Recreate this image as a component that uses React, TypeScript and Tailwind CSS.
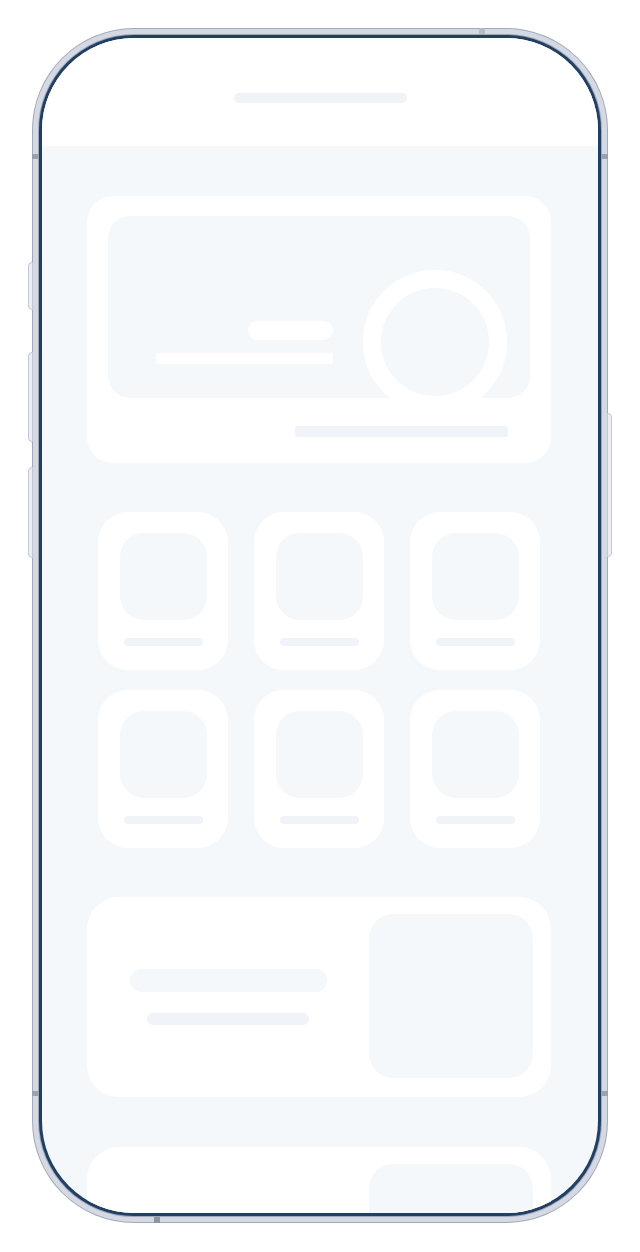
import React from 'react'

function Tile() {
  return (
    <div className="flex h-[158px] flex-col items-center rounded-[30px] bg-white pt-[21px]">
      <div className="h-[87px] w-[87px] rounded-[24px] bg-[#f4f8fb]" />
      <div className="mt-[18px] h-[8px] w-[79px] rounded-sm bg-[#f0f4f8]" />
    </div>
  )
}

function WideCard() {
  return (
    <section className="flex h-[200px] shrink-0 items-start rounded-[32px] bg-white pr-[18px] pt-[17px]">
      <div className="flex h-[166px] flex-1 flex-col items-center justify-center gap-[21px]">
        <div className="h-[23px] w-[197px] rounded-full bg-[#f4f8fb]" />
        <div className="h-[12px] w-[162px] rounded-full bg-[#f0f4f8]" />
      </div>
      <div className="h-[164px] w-[164px] rounded-[24px] bg-[#f4f8fb]" />
    </section>
  )
}

export default function App() {
  return (
    <div className="h-[1252px] w-[640px] overflow-hidden bg-white pl-[32px] pt-[28px]">
      {/* phone frame */}
      <div className="relative h-[1195px] w-[576px]">
        {/* side buttons */}
        <div className="absolute left-[-4px] top-[234px] h-[48px] w-[5px] rounded-l-sm border border-[#c3c8d2] bg-[#eceef2]" />
        <div className="absolute left-[-4px] top-[324px] h-[90px] w-[5px] rounded-l-sm border border-[#c3c8d2] bg-[#eceef2]" />
        <div className="absolute left-[-4px] top-[439px] h-[91px] w-[5px] rounded-l-sm border border-[#c3c8d2] bg-[#eceef2]" />
        <div className="absolute right-[-4px] top-[385px] h-[144px] w-[5px] rounded-r-sm border border-[#c3c8d2] bg-[#eceef2]" />

        <div className="h-full w-full rounded-[102px] bg-[#a3abb9] p-[1px]">
          <div className="h-full w-full rounded-[101px] bg-[#d5d9e3] p-[5px]">
            <div className="h-full w-full rounded-[96px] bg-[#9ea7b8] p-[1px]">
              <div className="h-full w-full rounded-[95px] bg-[#213f63] p-[3px]">
                {/* screen */}
                <div className="flex h-full w-full flex-col overflow-hidden rounded-[92px] bg-[#f4f8fb]">
                  <header className="flex h-[108px] shrink-0 justify-center bg-white pt-[55px]">
                    <div className="h-[10px] w-[173px] rounded-full bg-[#f0f4f8]" />
                  </header>

                  <main className="ml-[45px] flex w-[464px] flex-col pt-[50px]">
                    {/* hero card */}
                    <section className="flex h-[267px] flex-col rounded-[26px] bg-white px-[21px] pt-[20px]">
                      <div className="relative h-[182px] rounded-[22px] bg-[#f4f8fb]">
                        <div className="flex w-[225px] flex-col items-end gap-[13px] pt-[105px]">
                          <div className="h-[19px] w-[85px] rounded-full bg-white" />
                          <div className="h-[11px] w-[177px] rounded-[2px] bg-white" />
                        </div>
                        <div className="absolute left-[255px] top-[54px] h-[144px] w-[144px] rounded-full border-[18px] border-white bg-[#f4f8fb]" />
                      </div>
                      <div className="mt-[28px] flex justify-end pr-[22px]">
                        <div className="h-[11px] w-[213px] rounded-[2px] bg-[#f0f4f8]" />
                      </div>
                    </section>

                    {/* tiles */}
                    <div className="mx-auto mt-[49px] grid w-[442px] grid-cols-3 gap-x-[26px] gap-y-[20px]">
                      <Tile />
                      <Tile />
                      <Tile />
                      <Tile />
                      <Tile />
                      <Tile />
                    </div>

                    <div className="mt-[49px] flex flex-col gap-[50px]">
                      <WideCard />
                      <WideCard />
                    </div>
                  </main>
                </div>
              </div>
            </div>
          </div>
        </div>

        {/* antenna bands */}
        <div className="absolute left-0 top-[126px] h-[5px] w-[6px] bg-[#9aa2b0]" />
        <div className="absolute left-0 top-[1063px] h-[5px] w-[6px] bg-[#9aa2b0]" />
        <div className="absolute right-0 top-[126px] h-[5px] w-[6px] bg-[#9aa2b0]" />
        <div className="absolute right-0 top-[1063px] h-[5px] w-[6px] bg-[#9aa2b0]" />
        <div className="absolute left-[447px] top-0 h-[6px] w-[6px] bg-[#b5bcc7]" />
        <div className="absolute bottom-0 left-[122px] h-[6px] w-[6px] bg-[#8c95a4]" />
      </div>
    </div>
  )
}
